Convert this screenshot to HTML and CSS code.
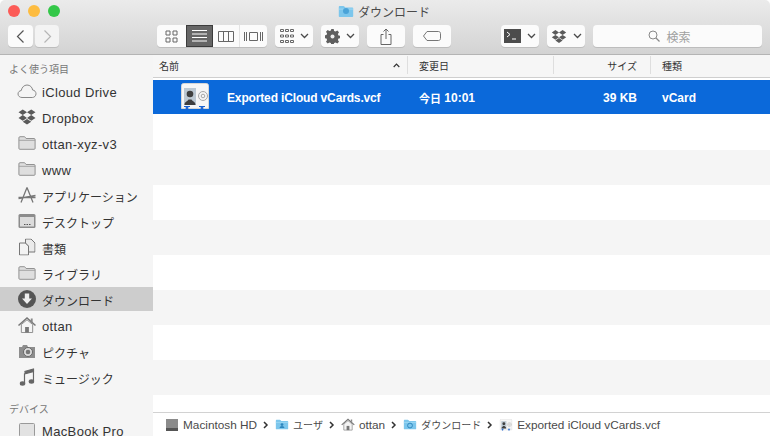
FILE: index.html
```html
<!DOCTYPE html>
<html lang="ja">
  <head>
    <meta charset="utf-8">
    <title>ダウンロード</title>
    <link rel="stylesheet" href="styles.css">
  </head>
  <body>
    <svg class="defs" width="0" height="0">
      <symbol id="folder" viewBox="0 0 20 16">
        <path d="M1 14V2.2C1 1.500 1.500 1 2.200 1h4.600c.6 0 .9.2 1.200.6L9 3h8.800c.7 0 1.200.5 1.200 1.200V14c0 .6-.5 1-1 1H2c-.6 0-1-.4-1-1z" fill="#dedede" stroke="#888"/>
        <path d="M1 5h18" stroke="#9c9c9c"/>
      </symbol>
      <symbol id="bluefolder" viewBox="0 0 20 16">
        <path d="M1 14V2.500C1 1.700 1.500 1 2.300 1h4.500c.5 0 .9.3 1.200.7L9 3h9c.6 0 1 .5 1 1v10c0 .6-.4 1-1 1H2c-.6 0-1-.4-1-1z" fill="#7cc6ec"/>
        <path d="M1 5h18" stroke="#a6dcf5"/>
      </symbol>
      <symbol id="dropbox" viewBox="0 0 20 18">
        <path d="M5.500 1 1 4l4.500 3L10 4zM14.500 1 10 4l4.500 3L19 4zM5.500 7 1 10l4.500 3L10 10zM14.500 7 10 10l4.500 3 4.500-3zM5.500 14l4.500 3 4.500-3-4.500-3z"/>
      </symbol>
      <symbol id="house" viewBox="0 0 20 18">
        <path d="M1 9.500 10 1.500l9 8" fill="none" stroke="#777" stroke-width="1.600"/>
        <path d="M4 8.500V17h12V8.500L10 3.500z" fill="#f4f4f4" stroke="#888"/>
        <path d="M8 17v-6h4v6z" fill="#777"/>
        <path d="M14 2h2v4l-2-1.500z" fill="#888"/>
      </symbol>
      <symbol id="chev" viewBox="0 0 9 6">
        <path d="M1 1l3.500 3.500L8 1" fill="none" stroke="#4a4a4a" stroke-width="1.300"/>
      </symbol>
      <symbol id="crumb" viewBox="0 0 6 8">
        <path d="M1 1l3 3-3 3" fill="none" stroke="#333" stroke-width="1.500"/>
      </symbol>
      <symbol id="card" viewBox="0 0 30 28">
        <path d="M1.500 2.500C1.500 1.400 2.400.5 3.500.5h23c1.100 0 2 .9 2 2v23H1.500z" fill="#f6f6f6" stroke="#d6d6d6"/>
        <rect x="4" y="5" width="12" height="17" fill="#bcc8d2"/>
        <circle cx="10" cy="11" r="3.300" fill="#3f3f3f"/>
        <path d="M4.500 22c0-3.500 3-3.500 4-5.500h3c1 2 4 2 4 5.500z" fill="#3f3f3f"/>
        <circle cx="23" cy="13" r="4.500" fill="none" stroke="#a8a8a8"/>
        <circle cx="23" cy="13" r="1.800" fill="none" stroke="#a8a8a8"/>
        <path d="M4 23.500h6M6.200 23.500h1.600V26.500H6.200zM19 23.500h6M21.200 23.500h1.600V26.500h-1.600z" stroke="#1a62d0" fill="#1a62d0"/>
      </symbol>
    </svg>

    <div class="window">
      <header class="toolbar">
        <div class="titlebar">
          <div class="lights">
            <span class="light red"></span>
            <span class="light yellow"></span>
            <span class="light green"></span>
          </div>
          <div class="title">
            <svg class="title-icon" width="16" height="13"><use href="#bluefolder"/></svg>
            <svg class="title-badge" width="6" height="6" viewBox="0 0 6 6"><circle cx="3" cy="3" r="3" fill="#4aa3d8"/></svg>
            <span>ダウンロード</span>
          </div>
        </div>
        <div class="tools">
          <button class="btn nav">
            <svg width="9" height="15" viewBox="0 0 9 15"><path d="M7.500 1.500 1.500 7.500l6 6" fill="none" stroke="#555" stroke-width="1.200"/></svg>
          </button>
          <button class="btn nav off">
            <svg width="9" height="15" viewBox="0 0 9 15"><path d="M1.500 1.500l6 6-6 6" fill="none" stroke="#b5b5b5" stroke-width="1.200"/></svg>
          </button>
          <div class="viewgroup">
            <button class="btn seg w-icon">
              <svg width="13" height="13" viewBox="0 0 13 13"><path d="M1 1h4v4H1zM8 1h4v4H8zM1 8h4v4H1zM8 8h4v4H8z" fill="none" stroke="#666"/></svg>
            </button>
            <button class="btn seg w-list on">
              <svg width="15" height="12" viewBox="0 0 15 12"><path d="M0 .5h15M0 4h15M0 7.500h15M0 11h15" stroke="#fff"/></svg>
            </button>
            <button class="btn seg w-col">
              <svg width="16" height="11" viewBox="0 0 16 11"><path d="M.5.500h15v10H.5zM5.500.500v10M10.500.500v10" fill="none" stroke="#666"/></svg>
            </button>
            <button class="btn seg w-cover">
              <svg width="19" height="11" viewBox="0 0 19 11"><path d="M.5 1v9M2.500 1v9M16.500 1v9M18.500 1v9M5.500 1.500h8v8h-8z" fill="none" stroke="#666"/></svg>
            </button>
          </div>
          <button class="btn drop arrange">
            <svg width="14" height="15" viewBox="0 0 14 15"><path d="M.5.500h3v2h-3zM5.500.500h3v2h-3zM10.500.500h3v2h-3zM.5 6h3v2h-3zM5.500 6h3v2h-3zM10.500 6h3v2h-3zM.5 11.500h3v2h-3zM5.500 11.500h3v2h-3zM10.500 11.500h3v2h-3z" fill="none" stroke="#666"/></svg>
            <svg width="9" height="6"><use href="#chev"/></svg>
          </button>
          <button class="btn drop action">
            <svg width="15" height="15" viewBox="0 0 15 15"><path d="M6.300 0h2.400l.4 2 1.500.6 1.700-1.100 1.700 1.700-1.100 1.700.6 1.500 2 .4v2.400l-2 .4-.6 1.500 1.100 1.700-1.700 1.700-1.700-1.100-1.500.6-.4 2H6.300l-.4-2-1.500-.6-1.700 1.100L1 12.800l1.100-1.700-.6-1.500-2-.4V6.300l2-.4.6-1.500L1 2.700 2.700 1l1.700 1.100 1.500-.6z" fill="#5f5f5f"/><circle cx="7.500" cy="7.500" r="2" fill="#eee"/></svg>
            <svg width="9" height="6"><use href="#chev"/></svg>
          </button>
          <button class="btn plain">
            <svg width="12" height="17" viewBox="0 0 12 17"><path d="M3.500 6.500H1v10h10v-10H8.500M6 11V1M3.500 3.500 6 1l2.500 2.500" fill="none" stroke="#666"/></svg>
          </button>
          <button class="btn plain">
            <svg width="18" height="10" viewBox="0 0 18 10"><path d="M4 .5h11.500c1 0 2 .8 2 2v5c0 1.200-1 2-2 2H4L.5 5z" fill="none" stroke="#777"/></svg>
          </button>
          <button class="btn drop terminal">
            <svg width="17" height="14" viewBox="0 0 17 14"><rect width="17" height="14" fill="#4c4c4c"/><path d="M3 3l3 2.500L3 8" fill="none" stroke="#fff"/><path d="M8 10h4" stroke="#fff"/></svg>
            <svg width="9" height="6"><use href="#chev"/></svg>
          </button>
          <button class="btn drop dropboxbtn">
            <svg class="ico-drop" width="16" height="15"><use href="#dropbox"/></svg>
            <svg width="9" height="6"><use href="#chev"/></svg>
          </button>
          <div class="search">
            <svg width="12" height="12" viewBox="0 0 12 12"><circle cx="5" cy="5" r="4" fill="none" stroke="#888"/><path d="M8 8l3.500 3.500" stroke="#888" stroke-width="1.200"/></svg>
            <span>検索</span>
          </div>
        </div>
      </header>

      <div class="main">
        <aside class="sidebar">
          <h3 class="side-head">よく使う項目</h3>
          <ul class="side-list">
            <li class="side-item">
              <svg class="side-ico" width="20" height="16" viewBox="0 0 20 16"><path d="M5 14.500c-2.200 0-4-1.500-4-3.500s1.500-3.300 3.200-3.400C4.800 4.500 7 2 10 2c3.200 0 5.300 2.300 5.600 5 2 .2 3.400 1.800 3.400 3.800 0 2-1.600 3.700-3.700 3.700z" fill="#f4f4f4" stroke="#888"/></svg>
              <span>iCloud Drive</span>
            </li>
            <li class="side-item">
              <svg class="side-ico ico-drop" width="19" height="17"><use href="#dropbox"/></svg>
              <span>Dropbox</span>
            </li>
            <li class="side-item">
              <svg class="side-ico" width="18" height="15"><use href="#folder"/></svg>
              <span>ottan-xyz-v3</span>
            </li>
            <li class="side-item">
              <svg class="side-ico" width="18" height="15"><use href="#folder"/></svg>
              <span>www</span>
            </li>
            <li class="side-item ja">
              <svg class="side-ico" width="19" height="17" viewBox="0 0 19 17"><path d="M9.500 1 3.500 16M9.500 1l6 15M1 12l17-3M1 11h17" fill="none" stroke="#777" stroke-width="1.300"/></svg>
              <span>アプリケーション</span>
            </li>
            <li class="side-item ja">
              <svg class="side-ico" width="18" height="15" viewBox="0 0 18 15"><rect x=".5" y=".5" width="17" height="14" rx="1.500" fill="#8c8c8c"/><rect x="2" y="3.500" width="14" height="9.500" fill="#dcdcdc"/><path d="M6 11h1.500M8.500 11H10M11 11h1.500" stroke="#555"/></svg>
              <span>デスクトップ</span>
            </li>
            <li class="side-item ja">
              <svg class="side-ico" width="17" height="17" viewBox="0 0 17 17"><path d="M1 4.500h6l3 3v9H1z" fill="#f3f3f3" stroke="#777"/><path d="M7 .5h5.500l4 4v9H10V7.500l-3-3z" fill="#eaeaea" stroke="#777"/></svg>
              <span>書類</span>
            </li>
            <li class="side-item ja">
              <svg class="side-ico" width="18" height="15"><use href="#folder"/></svg>
              <span>ライブラリ</span>
            </li>
            <li class="side-item ja current">
              <svg class="side-ico" width="18" height="18" viewBox="0 0 18 18"><circle cx="9" cy="9" r="9" fill="#555"/><path d="M6.800 3.500h4.400v5H14L9 14 4 8.500h2.800z" fill="#eee"/></svg>
              <span>ダウンロード</span>
            </li>
            <li class="side-item">
              <svg class="side-ico" width="19" height="17"><use href="#house"/></svg>
              <span>ottan</span>
            </li>
            <li class="side-item ja">
              <svg class="side-ico" width="18" height="14" viewBox="0 0 18 14"><path d="M1 3h3l1-2h4l1 2h7v11H1z" fill="#8d8d8d"/><circle cx="10" cy="8" r="4.500" fill="#ddd" stroke="#666"/><circle cx="10" cy="8" r="2.300" fill="#777"/></svg>
              <span>ピクチャ</span>
            </li>
            <li class="side-item ja">
              <svg class="side-ico" width="15" height="18" viewBox="0 0 15 18"><path d="M5 3.500 14 1v2.500L5 6v9" fill="#666" stroke="#666" stroke-width="1.200"/><path d="M14 1v12" stroke="#666" stroke-width="1.200"/><ellipse cx="3" cy="15.500" rx="2.800" ry="2.200" fill="#666"/><ellipse cx="12" cy="13.500" rx="2.800" ry="2.200" fill="#666"/></svg>
              <span>ミュージック</span>
            </li>
          </ul>
          <h3 class="side-head second">デバイス</h3>
          <ul class="side-list">
            <li class="side-item">
              <svg class="side-ico" width="16" height="14" viewBox="0 0 16 14"><rect x=".5" y=".5" width="15" height="13" rx="1" fill="#e2e2e2" stroke="#999"/></svg>
              <span>MacBook Pro</span>
            </li>
          </ul>
        </aside>

        <section class="content">
          <div class="colhead">
            <div class="col col-name">
              <span>名前</span>
              <svg width="7" height="5" viewBox="0 0 7 5"><path d="M.7 4l2.800-2.800L6.300 4" fill="none" stroke="#333" stroke-width="1.200"/></svg>
            </div>
            <div class="col col-date">変更日</div>
            <div class="col col-size">サイズ</div>
            <div class="col col-kind">種類</div>
          </div>
          <div class="rows">
            <div class="row selected">
              <div class="cell col-name file">
                <svg width="30" height="28"><use href="#card"/></svg>
                <span class="filename">Exported iCloud vCards.vcf</span>
              </div>
              <div class="cell col-date"><span class="today">今日</span>&nbsp;10:01</div>
              <div class="cell col-size">39 KB</div>
              <div class="cell col-kind">vCard</div>
            </div>
            <div class="row"></div>
            <div class="row alt"></div>
            <div class="row"></div>
            <div class="row alt"></div>
            <div class="row"></div>
            <div class="row alt"></div>
            <div class="row"></div>
            <div class="row alt"></div>
            <div class="row"></div>
          </div>
          <footer class="pathbar">
            <div class="crumb">
              <svg width="14" height="14" viewBox="0 0 14 14"><rect x="1" y="1" width="12" height="9" fill="#8b8b8b"/><rect x="1" y="10" width="12" height="3" fill="#555"/></svg>
              <span>Macintosh HD</span>
            </div>
            <svg width="6" height="8"><use href="#crumb"/></svg>
            <div class="crumb">
              <svg width="14" height="11" viewBox="0 0 20 16"><use href="#bluefolder"/><circle cx="10" cy="8" r="2" fill="#2d86bd"/><path d="M6.500 13c0-2 1.500-3 3.500-3s3.500 1 3.500 3z" fill="#2d86bd"/></svg>
              <span class="ja-small">ユーザ</span>
            </div>
            <svg width="6" height="8"><use href="#crumb"/></svg>
            <div class="crumb">
              <svg width="14" height="13"><use href="#house"/></svg>
              <span>ottan</span>
            </div>
            <svg width="6" height="8"><use href="#crumb"/></svg>
            <div class="crumb">
              <svg width="14" height="11" viewBox="0 0 20 16"><use href="#bluefolder"/><circle cx="10" cy="9.500" r="3.500" fill="none" stroke="#2d86bd" stroke-width="1.400"/></svg>
              <span class="ja-small">ダウンロード</span>
            </div>
            <svg width="6" height="8"><use href="#crumb"/></svg>
            <div class="crumb">
              <svg width="14" height="12"><use href="#card"/></svg>
              <span>Exported iCloud vCards.vcf</span>
            </div>
          </footer>
        </section>
      </div>
    </div>
  </body>
</html>
```

FILE: styles.css
```css
html,body,div,ul,h3{
  margin:0;
  padding:0;
}
html,body{
  background:#fff;
}
body{
  overflow:hidden;
  font-family:"Liberation Sans","Noto Sans CJK JP",sans-serif;
  color:#2e2e2e;
}
ul{
  list-style:none;
}
svg{
  display:block;
  flex:none;
}
.defs{
  position:absolute;
}
.window{
  display:flex;
  flex-direction:column;
  width:770px;
  height:436px;
  overflow:hidden;
  border-radius:5px 5px 0 0;
}

/* toolbar */
.toolbar{
  flex:none;
  height:55px;
  box-sizing:border-box;
  border-bottom:1px solid #b4b4b4;
  background:linear-gradient(#ebebeb,#d3d3d3);
}
.titlebar{
  position:relative;
  display:flex;
  align-items:center;
  justify-content:center;
  height:25px;
}
.lights{
  position:absolute;
  top:5px;
  left:8px;
  display:flex;
  gap:8px;
}
.light{
  width:12px;
  height:12px;
  border-radius:50%;
}
.red{background:#fc5b57;}
.yellow{background:#fdbc40;}
.green{background:#33c748;}
.title{
  position:relative;
  display:flex;
  align-items:center;
  gap:4px;
  margin:-3px 0 0 -2px;
  font-size:12px;
  color:#4a4a4a;
}
.title-badge{
  position:absolute;
  top:5px;
  left:5px;
}
.tools{
  display:flex;
  gap:8px;
  padding-left:8px;
}
.btn{
  display:flex;
  align-items:center;
  justify-content:center;
  gap:6px;
  width:38px;
  height:22px;
  padding:0;
  border:0;
  border-radius:4px;
  background:#fbfbfb;
  box-shadow:0 1px 0 #bdbdbd;
}
.btn.nav{
  width:25px;
  margin-right:-6px;
}
.btn.nav.off{
  margin-right:0;
  width:24px;
  background:#f3f3f3;
}
.viewgroup{
  display:flex;
  margin-left:90px;
  border-radius:4px;
  overflow:hidden;
  box-shadow:0 1px 0 #bdbdbd;
}
.seg{
  border-radius:0;
  box-shadow:none;
  border-right:1px solid #e4e4e4;
}
.w-icon{width:29px;border-right:0;}
.w-list{width:27px;border:1px solid #3c3c3c;background:#666;}
.w-col{width:27px;}
.w-cover{width:27px;border-right:0;}
.terminal{
  margin-left:42px;
}
.ico-drop{
  fill:#5a5a5a;
}
.search{
  display:flex;
  align-items:center;
  justify-content:center;
  gap:6px;
  width:169px;
  height:22px;
  box-sizing:border-box;
  padding-right:16px;
  border-radius:4px;
  background:#fbfbfb;
  box-shadow:0 1px 0 #bdbdbd;
  font-size:12px;
  color:#a0a0a0;
}

.main{
  flex:1;
  display:flex;
  min-height:0;
}

/* sidebar */
.sidebar{
  flex:none;
  width:153px;
  overflow:hidden;
  background:#f5f5f5;
}
.side-head{
  padding:8px 0 2px 9px;
  height:14px;
  line-height:14px;
  font-size:10px;
  font-weight:normal;
  color:#777;
}
.side-head.second{
  padding:14px 0 1px 9px;
}
.side-list{
  display:flex;
  flex-direction:column;
  gap:2px;
}
.side-item{
  position:relative;
  display:flex;
  align-items:center;
  height:24px;
  box-sizing:border-box;
  padding:2px 0 0 42px;
  font-size:13px;
  letter-spacing:.35px;
  color:#333;
}
.side-item.ja{
  font-size:12px;
  letter-spacing:0;
}
.side-item.current{
  background:#cdcdcd;
}
.side-ico{
  position:absolute;
  left:27px;
  top:50%;
  transform:translate(-50%,-50%);
}

/* file list */
.content{
  flex:1;
  display:flex;
  flex-direction:column;
  min-width:0;
  background:#fff;
}
.colhead{
  flex:none;
  display:flex;
  height:23px;
  box-sizing:border-box;
  border-bottom:1px solid #cfcfcf;
  background:#f6f6f6;
  font-size:10px;
  color:#333;
}
.col{
  display:flex;
  align-items:center;
  margin:1px 0 3px;
  border-right:1px solid #dedede;
}
.col-name{
  width:255px;
  box-sizing:border-box;
  padding:0 7px 0 6px;
  justify-content:space-between;
}
.col-date{
  width:146px;
  box-sizing:border-box;
  padding-left:11px;
}
.col-size{
  width:97px;
  box-sizing:border-box;
  justify-content:flex-end;
  padding-right:13px;
}
.col-kind{
  flex:1;
  padding-left:11px;
  border-right:0;
}
.rows{
  flex:1;
  padding-top:2px;
  overflow:hidden;
}
.row{
  display:flex;
  height:35px;
}
.row.alt{
  background:#f5f5f5;
}
.row.selected{
  height:34px;
  margin-bottom:1px;
  padding-top:1px;
  box-sizing:border-box;
  background:#0b69da;
  color:#fff;
  font-size:12px;
  font-weight:bold;
}
.cell{
  display:flex;
  align-items:center;
}
.row .col-size{
  padding-right:14px;
}
.file{
  justify-content:flex-start;
  gap:17px;
  padding-left:27px;
}
.file svg{
  margin-top:-1px;
}
.filename{
  letter-spacing:-.15px;
}
.today{
  font-size:11px;
}
.pathbar{
  flex:none;
  display:flex;
  align-items:center;
  gap:6px;
  height:24px;
  box-sizing:border-box;
  border-top:1px solid #d2d2d2;
  padding-left:12px;
  background:#fff;
  font-size:11.800px;
  color:#4a4a4a;
}
.crumb{
  display:flex;
  align-items:center;
  gap:4px;
}
.ja-small{
  font-size:10px;
}
```
